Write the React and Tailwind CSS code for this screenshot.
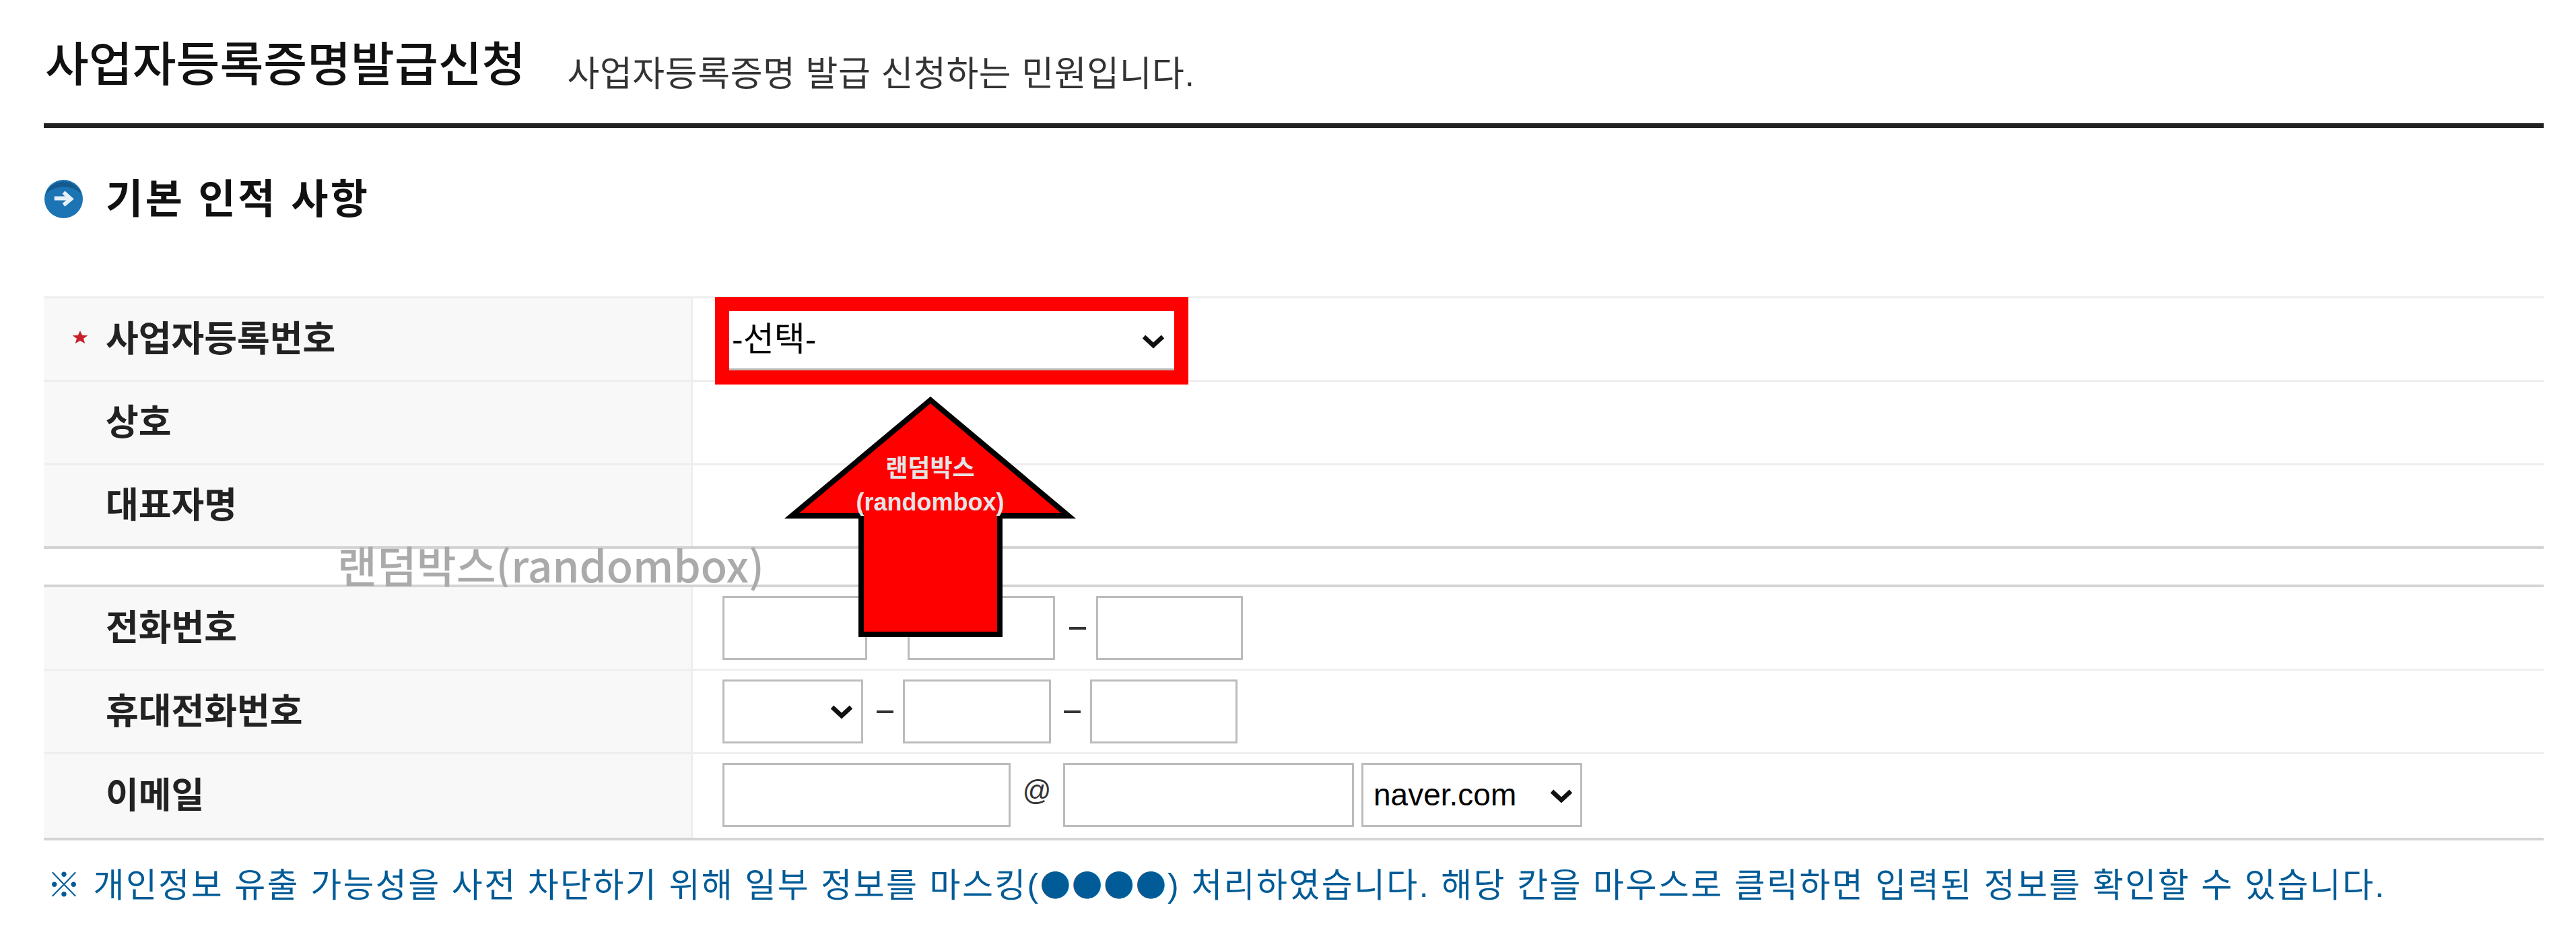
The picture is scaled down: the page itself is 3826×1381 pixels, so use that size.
import React from 'react';

const FONT = "font-['Liberation_Sans','Noto_Sans_CJK_KR',sans-serif]";

const Chevron = ({ className }) => (
    <svg viewBox="0 0 36 22" className={`pointer-events-none absolute ${className}`} fill="none">
        <path d="M4 4 L18 17 L32 4" stroke="#111" strokeWidth="6.5" />
    </svg>
);

const Field = ({ w }) => (
    <input type="text" className={`${w} h-[95px] shrink-0 border-[3px] border-[#bcbcbc] bg-white`} />
);

const Dash = () => <span className="block h-[4px] w-[25px] bg-[#333]"></span>;

const Row = ({ label, required, children, className = '', cellClass = '' }) => (
    <div className={`grid h-[124px] grid-cols-[964px_1fr] ${className}`}>
        <div className="flex items-center border-r-[3px] border-[#eeeeee] bg-[#f8f8f8] pl-[42px]">
            <span className="flex w-[50px] shrink-0 items-center">
                {required && (
                    <svg viewBox="0 0 20 20" preserveAspectRatio="none" className="-mt-[6px] h-[21px] w-[24px]">
                        <path d="M10 1 L12.6 7.4 L19.5 7.8 L14.2 12.2 L16 19 L10 15.2 L4 19 L5.8 12.2 L0.5 7.8 L7.4 7.4 Z" fill="#c8202a" />
                    </svg>
                )}
            </span>
            <span className="text-[53px] font-bold text-[#222]">{label}</span>
        </div>
        <div className={`flex items-center pl-[44px] ${cellClass}`}>{children}</div>
    </div>
);

export default function App() {
    return (
        <div className={`relative h-[1381px] w-[3826px] overflow-hidden bg-white pr-[48px] pl-[65px] ${FONT}`}>
            {/* Title */}
            <div className="flex h-[190px] items-start gap-[62px] border-b-[7px] border-[#222] pt-[44px]">
                <h1 className="pl-[2px] text-[70.5px] font-medium text-[#111]">사업자등록증명발급신청</h1>
                <p className="pt-[27px] text-[52px] tracking-[0.6px] text-[#333]">사업자등록증명 발급 신청하는 민원입니다.</p>
            </div>

            {/* Section heading */}
            <div className="mt-[75px] flex h-[60px] items-center gap-[33px]">
                <svg viewBox="0 0 60 60" className="h-[59px] w-[59px] shrink-0">
                    <circle cx="30" cy="30" r="29" fill="#1c74b4" />
                    <path d="M3 22 A29 29 0 0 1 57 22 A40 40 0 0 0 3 22 Z" fill="#155a8e" />
                    <path d="M16 29 H38 M30 20 L41 30 L30 39" stroke="#e6f0f7" strokeWidth="6" fill="none" />
                </svg>
                <h2 className="pt-[4px] text-[60px] font-bold tracking-[3.5px] text-[#111]">기본 인적 사항</h2>
            </div>

            {/* Form table */}
            <div className="mt-[115px] border-t-[3px] border-b-[4px] border-t-[#eeeeee] border-b-[#d4d4d4]">
                <Row label="사업자등록번호" required className="border-b-[3px] border-[#eeeeee]">
                    <div className="relative mt-[5px] ml-[10px] outline-[21px] outline-[#ff0000]">
                        <select className="block h-[88px] w-[661px] appearance-none border-b-[3px] border-[#bcbcbc] bg-white pl-[4px] text-[50px] text-black">
                            <option>-선택-</option>
                        </select>
                        <Chevron className="top-[34px] right-[13px] h-[22px] w-[36px]" />
                    </div>
                </Row>
                <Row label="상호" className="border-b-[3px] border-[#eeeeee]" />
                <Row label="대표자명" className="border-b-[4px] border-[#d4d4d4]" />

                {/* Gap row holding the watermark caption */}
                <div className="h-[57px] border-b-[4px] border-[#d4d4d4] pl-[436px]">
                    <span className="block font-['Noto_Sans_CJK_KR',sans-serif] text-[64px] leading-[45px] font-medium whitespace-nowrap text-[#aaaaaa]">랜덤박스(randombox)</span>
                </div>

                <Row label="전화번호" className="border-b-[3px] border-[#eeeeee]">
                    <Field w="w-[215px]" />
                    <span className="w-[60px] shrink-0"></span>
                    <Field w="w-[219px]" />
                    <span className="mr-[15px] ml-[21px] shrink-0"><Dash /></span>
                    <Field w="w-[218px]" />
                </Row>
                <Row label="휴대전화번호" className="border-b-[3px] border-[#eeeeee]">
                    <div className="relative shrink-0">
                        <select className="block h-[95px] w-[209px] appearance-none border-[3px] border-[#bcbcbc] bg-white"></select>
                        <Chevron className="top-[37px] right-[14px] h-[22px] w-[36px]" />
                    </div>
                    <span className="mr-[14px] ml-[20px] shrink-0"><Dash /></span>
                    <Field w="w-[220px]" />
                    <span className="mr-[14px] ml-[19px] shrink-0"><Dash /></span>
                    <Field w="w-[219px]" />
                </Row>
                <Row label="이메일" cellClass="pb-[4px]">
                    <Field w="w-[428px]" />
                    <span className="-mt-[14px] w-[78px] shrink-0 text-center text-[42px] text-[#333]">@</span>
                    <Field w="w-[432px]" />
                    <div className="relative ml-[11px] shrink-0">
                        <select className="block h-[95px] w-[328px] appearance-none border-[3px] border-[#bcbcbc] bg-white pl-[15px] text-[46px] text-black">
                            <option>naver.com</option>
                        </select>
                        <Chevron className="top-[38px] right-[13px] h-[22px] w-[36px]" />
                    </div>
                </Row>
            </div>

            <p className="mt-[30px] pl-[5px] text-[50px] tracking-[2.35px] whitespace-nowrap text-[#005b96]">
                ※ 개인정보 유출 가능성을 사전 차단하기 위해 일부 정보를 마스킹(<span className="font-['Noto_Sans_CJK_KR',sans-serif] text-[45px]">●●●●</span>) 처리하였습니다. 해당 칸을 마우스로 클릭하면 입력된 정보를 확인할 수 있습니다.
            </p>

            {/* Annotation arrow over the form */}
            <div className="absolute top-[589px] left-[1165px] h-[357px] w-[433px]">
                <svg viewBox="0 0 433 357" className="h-full w-full">
                    <path d="M217 5 L422 177 L320 177 L320 353 L114 353 L114 177 L11 177 Z" fill="#ff0000" stroke="#000" strokeWidth="8" strokeMiterlimit="10" />
                </svg>
                <div className="absolute inset-x-0 top-[82px] text-center text-[36px] leading-[50px] font-bold text-[#e4e4e4]">
                    <div>랜덤박스</div>
                    <div>(randombox)</div>
                </div>
            </div>
        </div>
    );
}
